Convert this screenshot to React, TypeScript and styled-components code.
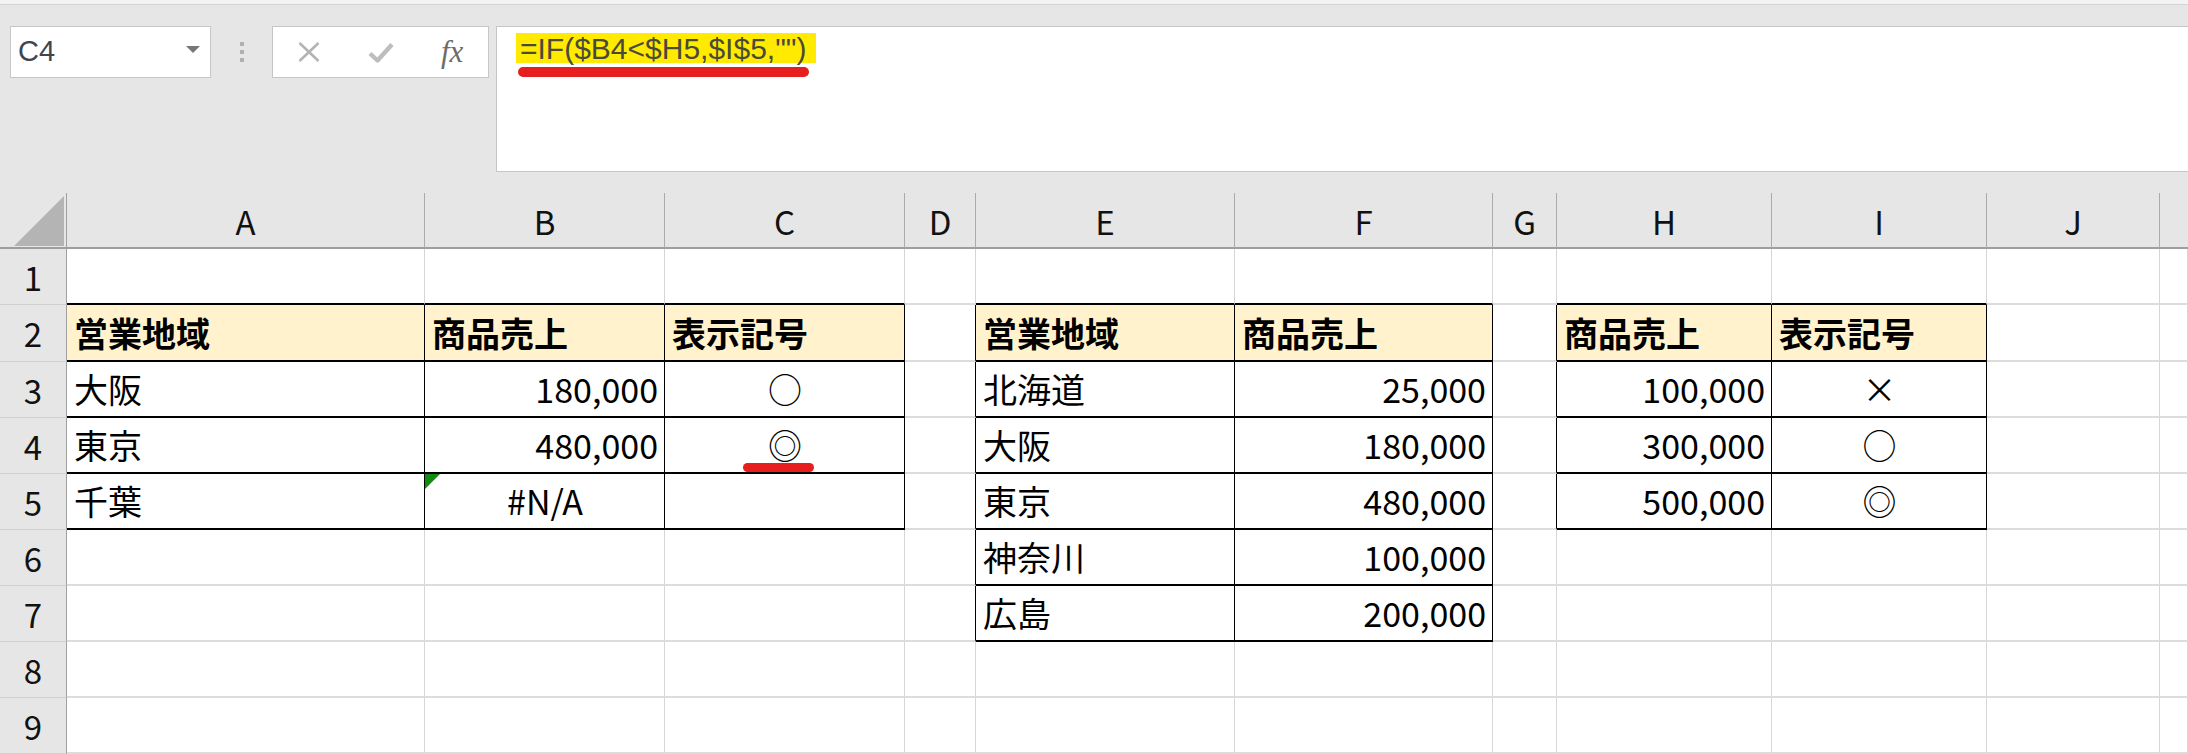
import React from 'react';
import styled, { createGlobalStyle } from 'styled-components';

type Align = 'left' | 'right' | 'center';

interface CellData {
  v: string;
  align?: Align;
  head?: boolean;
  mark?: 'underline' | 'error';
}

const GlobalStyle = createGlobalStyle`
  html, body {
    margin: 0;
    padding: 0;
    background: #fff;
    overflow: hidden;
  }
  body {
    font-family: "Noto Sans CJK JP", "Noto Sans", sans-serif;
  }
`;

const COLS = [
  { key: 'A', width: 358 },
  { key: 'B', width: 240 },
  { key: 'C', width: 240 },
  { key: 'D', width: 71 },
  { key: 'E', width: 259 },
  { key: 'F', width: 258 },
  { key: 'G', width: 64 },
  { key: 'H', width: 215 },
  { key: 'I', width: 215 },
  { key: 'J', width: 173 },
  { key: 'K', width: 0 },
];
const KEYS = COLS.map((c) => c.key);
const ROWS = [1, 2, 3, 4, 5, 6, 7, 8, 9];

const TABLES = [
  { r1: 2, r2: 5, c1: 'A', c2: 'C' },
  { r1: 2, r2: 7, c1: 'E', c2: 'F' },
  { r1: 2, r2: 5, c1: 'H', c2: 'I' },
];

const hd = (v: string): CellData => ({ v, head: true });
const txt = (v: string): CellData => ({ v });
const num = (v: string): CellData => ({ v, align: 'right' });
const sym = (v: string): CellData => ({ v, align: 'center' });

const DATA: Record<number, Record<string, CellData>> = {
  2: { A: hd('営業地域'), B: hd('商品売上'), C: hd('表示記号'), E: hd('営業地域'), F: hd('商品売上'), H: hd('商品売上'), I: hd('表示記号') },
  3: { A: txt('大阪'), B: num('180,000'), C: sym('○'), E: txt('北海道'), F: num('25,000'), H: num('100,000'), I: sym('×') },
  4: { A: txt('東京'), B: num('480,000'), C: { v: '◎', align: 'center', mark: 'underline' }, E: txt('大阪'), F: num('180,000'), H: num('300,000'), I: sym('○') },
  5: { A: txt('千葉'), B: { v: '#N/A', align: 'center', mark: 'error' }, E: txt('東京'), F: num('480,000'), H: num('500,000'), I: sym('◎') },
  6: { E: txt('神奈川'), F: num('100,000') },
  7: { E: txt('広島'), F: num('200,000') },
};

const inTable = (r: number, c: string) => {
  const i = KEYS.indexOf(c);
  return TABLES.some((t) => r >= t.r1 && r <= t.r2 && i >= KEYS.indexOf(t.c1) && i <= KEYS.indexOf(t.c2));
};

const Page = styled.div`
  width: 2188px;
  height: 754px;
  display: flex;
  flex-direction: column;
  background: #e6e6e6;
`;

const TopStrip = styled.div`
  height: 4px;
  background: #f3f3f3;
  border-bottom: 1px solid #d2d2d2;
`;

const FormulaBar = styled.div`
  display: flex;
  align-items: flex-start;
  padding: 21px 0 21px 10px;
`;

const NameBox = styled.div`
  width: 201px;
  height: 52px;
  box-sizing: border-box;
  border: 1px solid #c6c6c6;
  background: #fff;
  display: flex;
  align-items: center;
  justify-content: space-between;
  padding: 0 10px 2px 7px;
`;

const NameText = styled.span`
  font-family: "Liberation Sans", Arial, sans-serif;
  font-size: 29px;
  color: #3f4650;
`;

const DropArrow = styled.span`
  width: 0;
  height: 0;
  margin-bottom: 3px;
  border-left: 7px solid transparent;
  border-right: 7px solid transparent;
  border-top: 7px solid #777;
`;

const Grip = styled.div`
  width: 61px;
  height: 52px;
  display: flex;
  flex-direction: column;
  align-items: center;
  justify-content: center;
  gap: 4px;
  i {
    display: block;
    width: 4px;
    height: 4px;
    background: #b0b0b0;
  }
`;

const FuncBox = styled.div`
  width: 217px;
  height: 52px;
  box-sizing: border-box;
  border: 1px solid #c6c6c6;
  background: #fff;
  display: flex;
  align-items: center;
`;

const IconSlot = styled.div`
  width: 72px;
  display: flex;
  justify-content: center;
  align-items: center;
`;

const Fx = styled.span`
  font-family: "Liberation Serif", "Times New Roman", serif;
  font-style: italic;
  font-size: 31px;
  line-height: 1;
  color: #6b6b6b;
  margin-bottom: 2px;
`;

const FormulaBox = styled.div`
  flex: 1;
  height: 146px;
  margin-left: 7px;
  box-sizing: border-box;
  border: 1px solid #c6c6c6;
  border-right: none;
  background: #fff;
  padding: 6px 0 0 19px;
`;

const Formula = styled.span`
  display: inline-block;
  height: 30px;
  line-height: 31px;
  padding: 0 10px 0 4px;
  background: #ffea00;
  font-family: "Liberation Sans", Arial, sans-serif;
  font-size: 30px;
  color: #4a4a3c;
`;

const Underline = styled.div`
  width: 291px;
  height: 10px;
  margin: 3px 0 0 2px;
  border-radius: 5px;
  background: #e61e1e;
`;

const Sheet = styled.div`
  flex: 1;
  display: grid;
  grid-template-columns: 67px ${COLS.slice(0, -1).map((c) => `${c.width}px`).join(' ')} 1fr;
  grid-template-rows: 56px 56px 57px repeat(7, 56px);
  background: #fff;
`;

const Corner = styled.div`
  background: #e6e6e6;
  border-right: 1px solid #a0a0a0;
  border-bottom: 2px solid #9e9e9e;
  display: flex;
  align-items: flex-end;
  justify-content: flex-end;
  padding: 0 2px 1px 0;
`;

const ColHead = styled.div<{ $last?: boolean }>`
  background: #e6e6e6;
  border-right: ${(p) => (p.$last ? 'none' : '1px solid #ababab')};
  border-bottom: 2px solid #9e9e9e;
  display: flex;
  align-items: center;
  justify-content: center;
  font-size: 33px;
  color: #111;
  padding-top: 1px;
`;

const RowHead = styled.div`
  background: #e6e6e6;
  border-right: 1px solid #a0a0a0;
  border-bottom: 1px solid #d0d0d0;
  display: flex;
  align-items: center;
  justify-content: center;
  font-size: 33px;
  color: #111;
`;

const Cell = styled.div<{ $align: Align; $head?: boolean; $edgeR?: boolean; $edgeB?: boolean }>`
  position: relative;
  display: flex;
  align-items: center;
  justify-content: ${(p) => (p.$align === 'right' ? 'flex-end' : p.$align === 'center' ? 'center' : 'flex-start')};
  padding: 0 6px 0 7px;
  min-width: 0;
  font-size: 34px;
  line-height: 1;
  white-space: nowrap;
  color: #000;
  font-weight: ${(p) => (p.$head ? 700 : 400)};
  background: ${(p) => (p.$head ? '#fff2cc' : '#fff')};
  border-right: 1px solid ${(p) => (p.$edgeR ? '#000' : '#d6d6d6')};
  border-bottom: 2px solid ${(p) => (p.$edgeB ? '#000' : '#dcdcdc')};
`;

const RedMark = styled.span`
  position: absolute;
  left: 78px;
  top: 45px;
  width: 71px;
  height: 9px;
  border-radius: 5px;
  background: #e61e1e;
`;

const ErrorFlag = styled.span`
  position: absolute;
  left: 0;
  top: 0;
  width: 0;
  height: 0;
  border-top: 15px solid #138a13;
  border-right: 15px solid transparent;
`;

function SheetCell({ r, c }: { r: number; c: string }) {
  const d = DATA[r]?.[c];
  const i = KEYS.indexOf(c);
  const right = KEYS[i + 1];
  const edgeR = inTable(r, c) || (right ? inTable(r, right) : false);
  const edgeB = inTable(r, c) || inTable(r + 1, c);
  return (
    <Cell $align={d?.align ?? 'left'} $head={d?.head} $edgeR={edgeR} $edgeB={edgeB}>
      {d?.mark === 'error' && <ErrorFlag />}
      {d?.v}
      {d?.mark === 'underline' && <RedMark />}
    </Cell>
  );
}

export default function App() {
  return (
    <Page>
      <GlobalStyle />
      <TopStrip />
      <FormulaBar>
        <NameBox>
          <NameText>C4</NameText>
          <DropArrow />
        </NameBox>
        <Grip>
          <i />
          <i />
          <i />
        </Grip>
        <FuncBox>
          <IconSlot>
            <svg width="22" height="20" viewBox="0 0 22 20">
              <path d="M1.5 1L20.5 19M20.5 1L1.5 19" stroke="#b3b3b3" strokeWidth="2.6" fill="none" />
            </svg>
          </IconSlot>
          <IconSlot>
            <svg width="26" height="21" viewBox="0 0 26 21">
              <path d="M2 11.5L9.5 18.5L24 2.5" stroke="#bdbdbd" strokeWidth="4.4" fill="none" strokeLinejoin="round" />
            </svg>
          </IconSlot>
          <IconSlot>
            <Fx>fx</Fx>
          </IconSlot>
        </FuncBox>
        <FormulaBox>
          <Formula>=IF($B4&lt;$H5,$I$5,"")</Formula>
          <Underline />
        </FormulaBox>
      </FormulaBar>
      <Sheet>
        <Corner>
          <svg width="50" height="50" viewBox="0 0 50 50">
            <path d="M50 0V50H0Z" fill="#b4b4b4" />
          </svg>
        </Corner>
        {COLS.map((c, i) => (
          <ColHead key={c.key} $last={i === COLS.length - 1}>
            {c.key === 'K' ? '' : c.key}
          </ColHead>
        ))}
        {ROWS.map((r) => (
          <React.Fragment key={r}>
            <RowHead>{r}</RowHead>
            {KEYS.map((c) => (
              <SheetCell key={c} r={r} c={c} />
            ))}
          </React.Fragment>
        ))}
      </Sheet>
    </Page>
  );
}
